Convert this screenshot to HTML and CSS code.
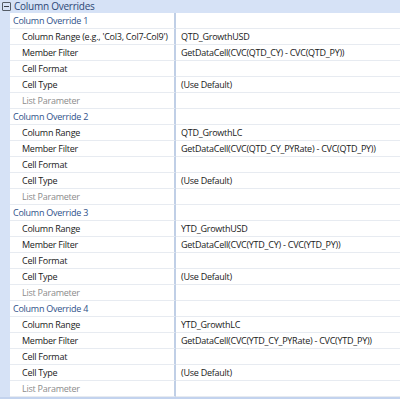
FILE: index.html
```html
<!DOCTYPE html>
<html lang="en">
<head>
    <meta charset="UTF-8">
    <title>Column Overrides</title>
    <link rel="stylesheet" href="styles.css">
</head>
<body>
    <div class="grid">
        <div class="header">
            <span class="toggle"></span>
            <span class="header-text">Column Overrides</span>
        </div>

        <div class="row cat"><div class="name">Column Override 1</div><div class="value"></div></div>
        <div class="row"><div class="name">Column Range (e.g., 'Col3, Col7-Col9')</div><div class="value">QTD_GrowthUSD</div></div>
        <div class="row"><div class="name">Member Filter</div><div class="value">GetDataCell(CVC(QTD_CY) - CVC(QTD_PY))</div></div>
        <div class="row"><div class="name">Cell Format</div><div class="value"></div></div>
        <div class="row"><div class="name">Cell Type</div><div class="value">(Use Default)</div></div>
        <div class="row off"><div class="name">List Parameter</div><div class="value"></div></div>

        <div class="row cat"><div class="name">Column Override 2</div><div class="value"></div></div>
        <div class="row"><div class="name">Column Range</div><div class="value">QTD_GrowthLC</div></div>
        <div class="row"><div class="name">Member Filter</div><div class="value">GetDataCell(CVC(QTD_CY_PYRate) - CVC(QTD_PY))</div></div>
        <div class="row"><div class="name">Cell Format</div><div class="value"></div></div>
        <div class="row"><div class="name">Cell Type</div><div class="value">(Use Default)</div></div>
        <div class="row off"><div class="name">List Parameter</div><div class="value"></div></div>

        <div class="row cat"><div class="name">Column Override 3</div><div class="value"></div></div>
        <div class="row"><div class="name">Column Range</div><div class="value">YTD_GrowthUSD</div></div>
        <div class="row"><div class="name">Member Filter</div><div class="value">GetDataCell(CVC(YTD_CY) - CVC(YTD_PY))</div></div>
        <div class="row"><div class="name">Cell Format</div><div class="value"></div></div>
        <div class="row"><div class="name">Cell Type</div><div class="value">(Use Default)</div></div>
        <div class="row off"><div class="name">List Parameter</div><div class="value"></div></div>

        <div class="row cat"><div class="name">Column Override 4</div><div class="value"></div></div>
        <div class="row"><div class="name">Column Range</div><div class="value">YTD_GrowthLC</div></div>
        <div class="row"><div class="name">Member Filter</div><div class="value">GetDataCell(CVC(YTD_CY_PYRate) - CVC(YTD_PY))</div></div>
        <div class="row"><div class="name">Cell Format</div><div class="value"></div></div>
        <div class="row"><div class="name">Cell Type</div><div class="value">(Use Default)</div></div>
        <div class="row off"><div class="name">List Parameter</div><div class="value"></div></div>
    </div>
</body>
</html>
```

FILE: styles.css
```css
body {
    margin: 0;
    background: #fff;
    font-family: "Open Sans", "Noto Sans", sans-serif;
    font-size: 9px;
    letter-spacing: -0.25px;
    color: #1a1a1a;
    overflow: hidden;
}

.grid {
    width: 400px;
    height: 397px;
    border-bottom: 2px solid #c3d3ee;
    background: linear-gradient(to right, #d6e2f6 10px, #fff 10px);
    overflow: hidden;
}

.header {
    display: flex;
    align-items: center;
    height: 13px;
    background: #d6e2f6;
    color: #2d4775;
    font-size: 10px;
}

.toggle {
    width: 7px;
    height: 7px;
    margin: 0 3px 0 2px;
    border: 1px solid #555c66;
    border-radius: 1px;
    position: relative;
}

.toggle::after {
    content: "";
    position: absolute;
    left: 1px;
    right: 1px;
    top: 3px;
    height: 1px;
    background: #3a3f46;
}

.header-text {
    line-height: 13px;
}

.row {
    display: flex;
    height: 16px;
    margin-left: 10px;
}

.name {
    width: 166px;
    padding-left: 12px;
    box-sizing: border-box;
    line-height: 15px;
    border-bottom: 1px solid #e7ebf1;
    border-right: 2px solid #c0cfe6;
    white-space: nowrap;
    overflow: hidden;
}

.value {
    flex: 1;
    padding-left: 5px;
    line-height: 15px;
    border-bottom: 1px solid #e7ebf1;
    white-space: nowrap;
    overflow: hidden;
}

.cat .name {
    padding-left: 3px;
    color: #2f5189;
}

.off .name {
    color: #8c8c8c;
}
```
